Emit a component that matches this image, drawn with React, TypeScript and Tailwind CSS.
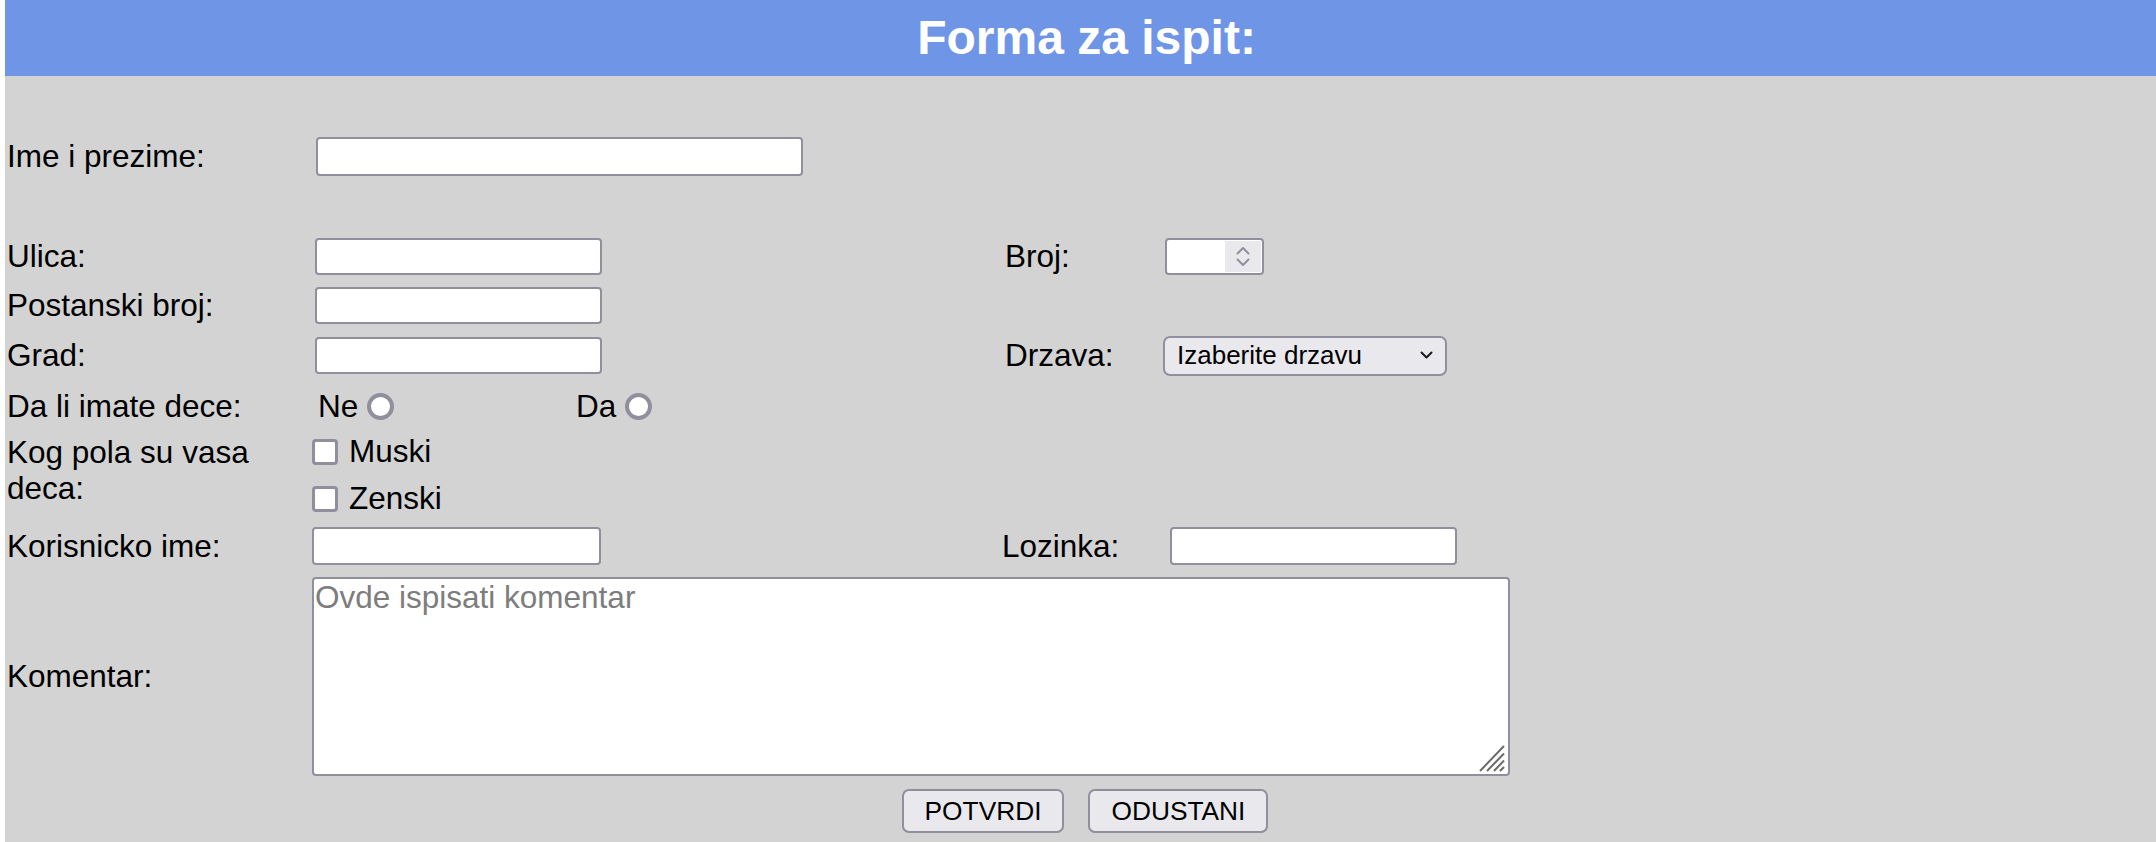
import React from 'react'

const font = "font-['Liberation_Sans',Arial,Helvetica,sans-serif]"

const inputCls =
  'block bg-white border-2 border-[#8f8f9d] rounded-[4px] px-[4px] text-[26px] outline-none'

const Radio = () => (
  <span className="inline-block w-[27px] h-[27px] rounded-full bg-white border-[4px] border-[#8f8f9d]" />
)

const Checkbox = () => (
  <span className="inline-block w-[26px] h-[26px] rounded-[4px] bg-white border-[3px] border-[#8f8f9d]" />
)

const NumberInput = () => (
  <div className="relative w-[99px] h-[37px] bg-white border-2 border-[#8f8f9d] rounded-[4px]">
    <div className="absolute right-[1px] top-[1px] bottom-[1px] w-[36px] bg-[#e9e9ed] flex flex-col items-center justify-center gap-[3px]">
      <svg width="14" height="9" viewBox="0 0 14 9" fill="none">
        <path d="M1.5 7.5L7 2l5.5 5.5" stroke="#8f8f9d" strokeWidth="2" strokeLinecap="round" strokeLinejoin="round" />
      </svg>
      <svg width="14" height="9" viewBox="0 0 14 9" fill="none">
        <path d="M1.5 1.5L7 7l5.5-5.5" stroke="#8f8f9d" strokeWidth="2" strokeLinecap="round" strokeLinejoin="round" />
      </svg>
    </div>
  </div>
)

const Select = () => (
  <div className="relative w-[284px] h-[40px]">
    <select
      defaultValue=""
      className={`${font} appearance-none w-full h-full bg-[#e9e9ed] border-2 border-[#8f8f9d] rounded-[7px] pl-[12px] text-[26px] text-black outline-none`}
    >
      <option value="">Izaberite drzavu</option>
    </select>
    <svg
      className="absolute right-[14px] top-[16px] pointer-events-none"
      width="13"
      height="8"
      viewBox="0 0 13 8"
      fill="none"
    >
      <path d="M1.5 1.5L6.5 6.5l5-5" stroke="#1a1a1a" strokeWidth="2" strokeLinecap="round" strokeLinejoin="round" />
    </svg>
  </div>
)

const Grip = () => (
  <svg
    className="absolute right-[5px] bottom-[4px] pointer-events-none"
    width="26"
    height="27"
    viewBox="0 0 26 27"
    fill="none"
  >
    <path d="M1 26L25 1M8 26L25 8.5M15 26L25 15.5M21 26L25 22" stroke="#6b6b6b" strokeWidth="2" />
  </svg>
)

export default function App() {
  return (
    <div className={`${font} bg-white pl-[5px] h-[842px] overflow-hidden text-black`}>
      <div className="bg-[#d3d3d3] h-full">
        <header className="h-[76px] bg-[#6f95e6] flex items-center justify-center pl-[12px]">
          <h1 className="text-[48px] font-bold text-white leading-none">Forma za ispit:</h1>
        </header>

        <form className="pl-[2px] text-[31.5px] leading-[1.15]">
          <div className="mt-[61px] h-[39px] flex items-center">
            <label className="w-[309px]">Ime i prezime:</label>
            <input type="text" className={`${inputCls} w-[487px] h-[39px]`} />
          </div>

          <div className="mt-[62px] h-[37px] flex items-center">
            <label className="w-[308px]">Ulica:</label>
            <div className="w-[690px]">
              <input type="text" className={`${inputCls} w-[287px] h-[37px]`} />
            </div>
            <label className="w-[160px]">Broj:</label>
            <NumberInput />
          </div>

          <div className="mt-[12px] h-[37px] flex items-center">
            <label className="w-[308px]">Postanski broj:</label>
            <input type="text" className={`${inputCls} w-[287px] h-[37px]`} />
          </div>

          <div className="mt-[11px] h-[40px] flex items-center">
            <label className="w-[308px]">Grad:</label>
            <div className="w-[690px]">
              <input type="text" className={`${inputCls} w-[287px] h-[37px]`} />
            </div>
            <label className="w-[158px]">Drzava:</label>
            <Select />
          </div>

          <div className="mt-[9px] h-[44px] flex items-center">
            <label className="w-[311px]">Da li imate dece:</label>
            <div className="w-[258px] flex items-center gap-[9px]">
              <span>Ne</span>
              <Radio />
            </div>
            <div className="flex items-center gap-[9px]">
              <span>Da</span>
              <Radio />
            </div>
          </div>

          <div className="h-[94px] flex items-start">
            <label className="w-[305px] pt-[6px]">Kog pola su vasa deca:</label>
            <div className="flex flex-col">
              <div className="h-[47px] flex items-center gap-[11px]">
                <Checkbox />
                <span>Muski</span>
              </div>
              <div className="h-[47px] flex items-center gap-[11px]">
                <Checkbox />
                <span>Zenski</span>
              </div>
            </div>
          </div>

          <div className="mt-[5px] h-[38px] flex items-center">
            <label className="w-[305px]">Korisnicko ime:</label>
            <div className="w-[690px]">
              <input type="text" className={`${inputCls} w-[289px] h-[38px]`} />
            </div>
            <label className="w-[168px]">Lozinka:</label>
            <input type="password" className={`${inputCls} w-[287px] h-[38px]`} />
          </div>

          <div className="mt-[12px] h-[199px] flex items-center">
            <label className="w-[305px]">Komentar:</label>
            <div className="relative">
              <textarea
                placeholder="Ovde ispisati komentar"
                className={`${font} block w-[1198px] h-[199px] resize-none bg-white border-2 border-[#8f8f9d] rounded-[4px] px-[1px] pt-[0px] text-[31.5px] leading-[1.15] outline-none placeholder:text-[#7d7d7d]`}
              />
              <Grip />
            </div>
          </div>

          <div className="mt-[13px] flex justify-center gap-[24px] pl-[7px]">
            <button
              type="button"
              className="h-[44px] px-[21px] bg-[#e9e9ed] border-2 border-[#8f8f9d] rounded-[7px] text-[26.3px] leading-none"
            >
              POTVRDI
            </button>
            <button
              type="button"
              className="h-[44px] px-[21px] bg-[#e9e9ed] border-2 border-[#8f8f9d] rounded-[7px] text-[26.3px] leading-none"
            >
              ODUSTANI
            </button>
          </div>
        </form>
      </div>
    </div>
  )
}
